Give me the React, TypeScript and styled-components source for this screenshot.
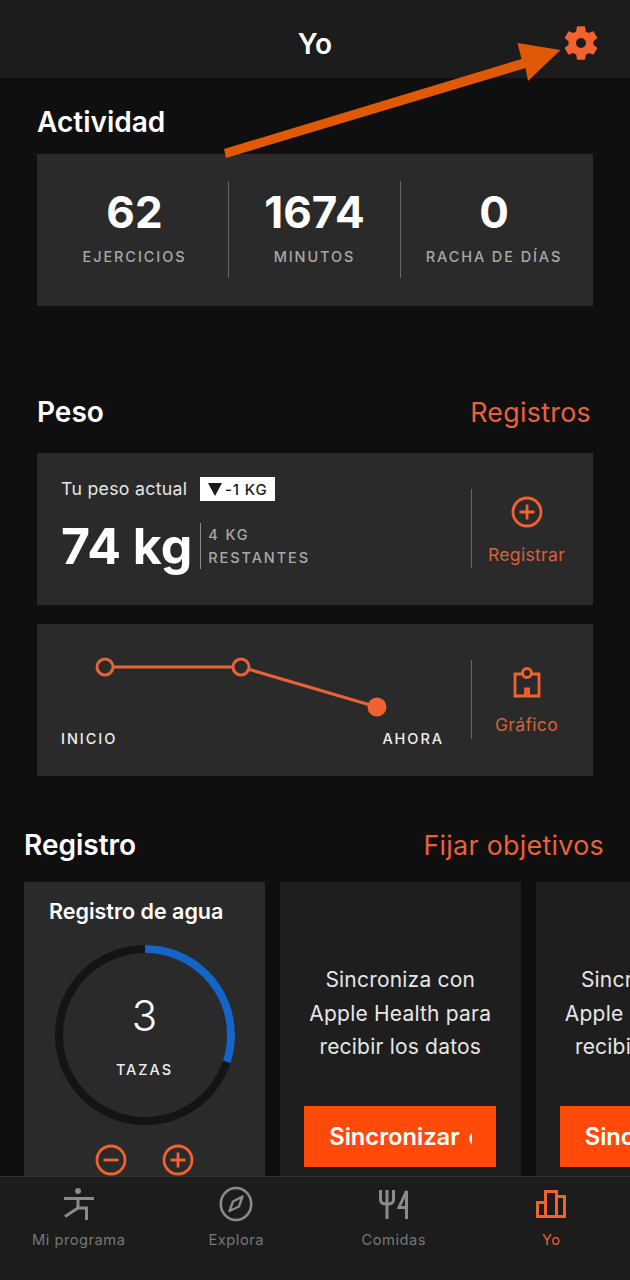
import React from "react";
import styled, { createGlobalStyle } from "styled-components";

const ORANGE = "#e8623a";
const ICON = "#f2622f";
const PANEL = "#2a2a2a";

const Global = createGlobalStyle`
  html, body { margin: 0; padding: 0; background: #0f0f0f; }
  * { box-sizing: border-box; }
`;

const Screen = styled.div`
  position: relative;
  width: 630px;
  height: 1280px;
  overflow: hidden;
  background: #0f0f0f;
  font-family: Inter, "Liberation Sans", sans-serif;
  color: #fff;
`;

const Header = styled.header`
  height: 78px;
  background: #1c1c1c;
  display: flex;
  align-items: center;
  justify-content: center;
  position: relative;
`;

const HeaderTitle = styled.h1`
  margin: 0;
  font-size: 28px;
  font-weight: 600;
  line-height: 1;
  padding-top: 10px;
`;

const GearSlot = styled.div`
  position: absolute;
  top: 23px;
  right: 29px;
  width: 40px;
  height: 40px;
  color: ${ICON};
`;

const Arrow = styled.svg`
  position: absolute;
  left: 0;
  top: 0;
  pointer-events: none;
`;

const Main = styled.main`
  padding: 0 37px;
`;

const SectionHead = styled.div<{ $top: number }>`
  display: flex;
  align-items: center;
  justify-content: space-between;
  height: 34px;
  padding-top: ${(p) => p.$top}px;
  box-sizing: content-box;
  padding-right: 2px;
`;

const SectionTitle = styled.h2`
  margin: 0;
  font-size: 28px;
  font-weight: 600;
`;

const SectionLink = styled.span`
  font-size: 26.8px;
  font-weight: 400;
  color: ${ORANGE};
  letter-spacing: 0.3px;
`;

const Card = styled.section<{ $mt: number }>`
  background: ${PANEL};
  height: 152px;
  margin-top: ${(p) => p.$mt}px;
  display: flex;
`;

const Stats = styled(Card)`
  padding: 27px 0 28px;
`;

const Stat = styled.div<{ $w: number; $divider?: boolean; $shift?: number }>`
  width: ${(p) => p.$w}px;
  display: flex;
  flex-direction: column;
  align-items: center;
  padding-left: ${(p) => Math.max(p.$shift ?? 0, 0)}px;
  padding-right: ${(p) => Math.max(-(p.$shift ?? 0), 0)}px;
  border-right: ${(p) => (p.$divider ? "1.5px solid #666" : "none")};
`;

const StatValue = styled.div`
  font-size: 44px;
  font-weight: 700;
  line-height: 60px;
  margin-top: 1px;
`;

const StatLabel = styled.div`
  font-size: 14.5px;
  font-weight: 500;
  letter-spacing: 1.9px;
  color: #a8a8a8;
  line-height: 20px;
  margin-top: 5px;
`;

const CardBody = styled.div`
  flex: 1;
  padding: 24px 0 0 24px;
  min-width: 0;
`;

const CurrentRow = styled.div`
  display: flex;
  align-items: center;
  height: 24px;
`;

const CurrentLabel = styled.span`
  font-size: 17.7px;
  color: #e6e6e6;
  letter-spacing: 0.3px;
  padding-bottom: 2px;
`;

const DeltaBadge = styled.span`
  margin-left: 13px;
  width: 75px;
  height: 24px;
  background: #fff;
  color: #1a1a1a;
  font-size: 15px;
  font-weight: 500;
  letter-spacing: 0.9px;
  display: flex;
  align-items: center;
  justify-content: center;
  gap: 3px;
`;

const DeltaMark = styled.span`
  width: 0;
  height: 0;
  border-left: 7px solid transparent;
  border-right: 7px solid transparent;
  border-top: 13px solid #1a1a1a;
`;

const WeightRow = styled.div`
  display: flex;
  align-items: center;
  margin-top: 20px;
`;

const WeightValue = styled.div`
  font-size: 50px;
  font-weight: 700;
  line-height: 50px;
  padding-right: 8px;
  white-space: nowrap;
`;

const RemainingBlock = styled.div`
  border-left: 1.5px solid #888;
  height: 46px;
  padding: 2px 0 1px 7px;
  display: flex;
  flex-direction: column;
  justify-content: space-between;
  font-size: 14.5px;
  font-weight: 500;
  line-height: 20px;
  letter-spacing: 1.9px;
  color: #a8a8a8;
`;

const ActionCol = styled.div<{ $gap: number; $pad: number }>`
  width: 122px;
  height: 79px;
  margin-top: 36px;
  padding: ${(p) => p.$pad}px 12px 0 0;
  border-left: 1.5px solid #666;
  display: flex;
  flex-direction: column;
  align-items: center;
  gap: ${(p) => p.$gap}px;
  color: ${ICON};
`;

const ActionLabel = styled.span`
  font-size: 17.6px;
  color: #d8603a;
  letter-spacing: 0.3px;
  line-height: 20px;
  flex-shrink: 0;
`;

const ChartBody = styled.div`
  flex: 1;
  padding: 24px 27px 0 24px;
  min-width: 0;
  display: flex;
  flex-direction: column;
`;

const ChartSvg = styled.svg`
  display: block;
  margin-bottom: -1px;
`;

const ChartLabels = styled.div`
  display: flex;
  justify-content: space-between;
  font-size: 14.5px;
  font-weight: 500;
  letter-spacing: 1.95px;
  color: #eee;
  line-height: 20px;
`;

const RegistroHead = styled(SectionHead)`
  margin-left: -13px;
  margin-right: -13px;
`;

const Carousel = styled.div`
  margin: 20px -37px 0 -13px;
  display: flex;
  gap: 15px;
`;

const WaterCard = styled.div`
  flex: 0 0 241px;
  height: 310px;
  background: ${PANEL};
  display: flex;
  flex-direction: column;
  align-items: center;
  padding-top: 14px;
`;

const WaterTitle = styled.div`
  align-self: flex-start;
  margin-left: 25px;
  font-size: 21.5px;
  font-weight: 600;
  line-height: 30px;
`;

const Ring = styled.div`
  position: relative;
  width: 180px;
  height: 180px;
  margin-top: 19px;
`;

const RingCenter = styled.div`
  position: absolute;
  inset: 0;
  display: flex;
  flex-direction: column;
  align-items: center;
`;

const RingValue = styled.div`
  font-size: 42px;
  font-weight: 300;
  line-height: 50px;
  margin-top: 46px;
`;

const RingLabel = styled.div`
  font-size: 14.5px;
  font-weight: 500;
  letter-spacing: 1.95px;
  line-height: 20px;
  color: #eee;
  margin-top: 19px;
`;

const WaterButtons = styled.div`
  display: flex;
  gap: 35px;
  margin-top: 19px;
  color: ${ICON};
`;

const SyncCard = styled.div`
  flex: 0 0 240.5px;
  height: 310px;
  background: #1e1e1e;
  display: flex;
  flex-direction: column;
  align-items: center;
  padding-top: 81px;
`;

const SyncText = styled.p`
  margin: 0;
  width: 200px;
  text-align: center;
  font-size: 21px;
  line-height: 33.5px;
  color: #e6e6e6;
  letter-spacing: 0.2px;
`;

const SyncButton = styled.div`
  margin-top: 42px;
  width: 192px;
  height: 61px;
  background: #ff4a0a;
  padding: 0 24px 0 25px;
  display: flex;
  align-items: center;
`;

const SyncButtonLabel = styled.span`
  display: block;
  overflow: hidden;
  white-space: nowrap;
  font-size: 23.7px;
  font-weight: 600;
  word-spacing: 3px;
  color: #fff;
`;

const TabBar = styled.nav`
  position: absolute;
  left: 0;
  right: 0;
  bottom: 0;
  height: 104px;
  background: #1c1c1c;
  border-top: 1.5px solid #333;
  display: grid;
  grid-template-columns: repeat(4, 1fr);
`;

const Tab = styled.div<{ $active?: boolean }>`
  display: flex;
  flex-direction: column;
  align-items: center;
  padding-top: 8px;
  color: ${(p) => (p.$active ? ICON : "#8a8a8a")};
`;

const TabIcon = styled.div`
  height: 38px;
  display: flex;
  align-items: center;
  justify-content: center;
`;

const TabLabel = styled.span<{ $active?: boolean }>`
  margin-top: 6.5px;
  font-size: 14.7px;
  letter-spacing: 0.5px;
  line-height: 20px;
  color: ${(p) => (p.$active ? "#e8623a" : "#777")};
`;

const Gear = () => (
  <svg width="40" height="40" viewBox="0 0 24 24" fill="currentColor">
    <path fillRule="evenodd" d="M19.43 12.98c.04-.32.07-.64.07-.98s-.03-.66-.07-.98l2.11-1.65c.19-.15.24-.42.12-.64l-2-3.46c-.12-.22-.39-.3-.61-.22l-2.49 1c-.52-.4-1.08-.73-1.69-.98l-.38-2.65A.49.49 0 0 0 14 2h-4c-.25 0-.46.18-.49.42l-.38 2.65c-.61.25-1.17.59-1.69.98l-2.49-1c-.23-.09-.49 0-.61.22l-2 3.46c-.13.22-.07.49.12.64l2.11 1.65c-.04.32-.07.65-.07.98s.03.66.07.98l-2.11 1.65c-.19.15-.24.42-.12.64l2 3.46c.12.22.39.3.61.22l2.49-1c.52.4 1.08.73 1.69.98l.38 2.65c.03.24.24.42.49.42h4c.25 0 .46-.18.49-.42l.38-2.65c.61-.25 1.17-.59 1.69-.98l2.49 1c.23.09.49 0 .61-.22l2-3.46c.12-.22.07-.49-.12-.64l-2.11-1.65zM12 15a3 3 0 1 1 0-6 3 3 0 0 1 0 6z" />
  </svg>
);

const CirclePlus = () => (
  <svg width="32" height="32" viewBox="0 0 32 32" fill="none" stroke="currentColor" strokeWidth="2.8">
    <circle cx="16" cy="16" r="14" />
    <path d="M16 8.500v15M8.500 16h15" />
  </svg>
);

const CircleMinus = () => (
  <svg width="32" height="32" viewBox="0 0 32 32" fill="none" stroke="currentColor" strokeWidth="2.8">
    <circle cx="16" cy="16" r="14" />
    <path d="M8.500 16h15" />
  </svg>
);

const Clipboard = () => (
  <svg width="30" height="32" viewBox="0 0 30 32" fill="none" stroke="currentColor" strokeWidth="2.8">
    <path d="M10 8H3v22h10.500v-7h3v7H27V8h-7" />
    <circle cx="15" cy="7" r="4.500" />
  </svg>
);

const Warrior = () => (
  <svg width="30" height="32" viewBox="0 0 30 32" fill="none" stroke="currentColor" strokeWidth="3">
    <circle cx="14" cy="3" r="3" fill="currentColor" stroke="none" />
    <path d="M0 10.500h30" />
    <path d="M14 10.500V20" />
    <path d="M1 28.500L14 20h8.500v12" />
  </svg>
);

const Compass = () => (
  <svg width="34" height="36" viewBox="0 0 34 36" fill="none" stroke="currentColor" strokeWidth="2.6">
    <ellipse cx="17" cy="18" rx="15.200" ry="16" />
    <path d="M23.500 10.500L20 20.500 10.500 25 14 15.500z" strokeWidth="2.4" strokeLinejoin="round" />
  </svg>
);

const Cutlery = () => (
  <svg width="30" height="30" viewBox="0 0 30 30" fill="none" stroke="currentColor" strokeWidth="3">
    <path d="M1.500 1v10q0 4 6.500 4t6.500-4V1" />
    <path d="M8 1v29" />
    <path d="M27.500 30V2L20 18.500h7.500" />
  </svg>
);

const Bars = () => (
  <svg width="30" height="30" viewBox="0 0 30 30" fill="none" stroke="currentColor" strokeWidth="3">
    <path d="M1.500 28V13.500h8M9.500 28V2.500h11V28M20.500 7.500h8V28M0 27.500h30" />
  </svg>
);

export default function App() {
  return (
    <Screen>
      <Global />
      <Header>
        <HeaderTitle>Yo</HeaderTitle>
        <GearSlot>
          <Gear />
        </GearSlot>
      </Header>
      <Main>
        <SectionHead $top={27}>
          <SectionTitle>Actividad</SectionTitle>
        </SectionHead>
        <Stats $mt={15}>
          <Stat $w={192} $divider $shift={4}>
            <StatValue>62</StatValue>
            <StatLabel>EJERCICIOS</StatLabel>
          </Stat>
          <Stat $w={172} $divider>
            <StatValue>1674</StatValue>
            <StatLabel>MINUTOS</StatLabel>
          </Stat>
          <Stat $w={192} $shift={-6}>
            <StatValue>0</StatValue>
            <StatLabel>RACHA DE DÍAS</StatLabel>
          </Stat>
        </Stats>

        <SectionHead $top={89}>
          <SectionTitle>Peso</SectionTitle>
          <SectionLink>Registros</SectionLink>
        </SectionHead>
        <Card $mt={24}>
          <CardBody>
            <CurrentRow>
              <CurrentLabel>Tu peso actual</CurrentLabel>
              <DeltaBadge>
                <DeltaMark />
                -1 KG
              </DeltaBadge>
            </CurrentRow>
            <WeightRow>
              <WeightValue>74 kg</WeightValue>
              <RemainingBlock>
                <span>4 KG</span>
                <span>RESTANTES</span>
              </RemainingBlock>
            </WeightRow>
          </CardBody>
          <ActionCol $pad={7} $gap={17}>
            <CirclePlus />
            <ActionLabel>Registrar</ActionLabel>
          </ActionCol>
        </Card>
        <Card $mt={19}>
          <ChartBody>
            <ChartSvg width="383" height="82" viewBox="0 0 383 82" fill="none">
              <path d="M44 19H180L316 59" stroke="#e8623a" strokeWidth="3" />
              <circle cx="44" cy="19" r="8" fill={PANEL} stroke="#e8623a" strokeWidth="3" />
              <circle cx="180" cy="19" r="8" fill={PANEL} stroke="#e8623a" strokeWidth="3" />
              <circle cx="316" cy="59" r="9.500" fill="#f2622f" />
            </ChartSvg>
            <ChartLabels>
              <span>INICIO</span>
              <span>AHORA</span>
            </ChartLabels>
          </ChartBody>
          <ActionCol $pad={6} $gap={17}>
            <Clipboard />
            <ActionLabel>Gráfico</ActionLabel>
          </ActionCol>
        </Card>

        <RegistroHead $top={52}>
          <SectionTitle>Registro</SectionTitle>
          <SectionLink>Fijar objetivos</SectionLink>
        </RegistroHead>
        <Carousel>
          <WaterCard>
            <WaterTitle>Registro de agua</WaterTitle>
            <Ring>
              <svg width="180" height="180" viewBox="0 0 180 180" fill="none">
                <circle cx="90" cy="90" r="86" stroke="#141414" strokeWidth="8" />
                <circle
                  cx="90"
                  cy="90"
                  r="86"
                  stroke="#1565c8"
                  strokeWidth="8"
                  strokeDasharray={`${2 * Math.PI * 86 * 0.3} ${2 * Math.PI * 86}`}
                  transform="rotate(-90 90 90)"
                />
              </svg>
              <RingCenter>
                <RingValue>3</RingValue>
                <RingLabel>TAZAS</RingLabel>
              </RingCenter>
            </Ring>
            <WaterButtons>
              <CircleMinus />
              <CirclePlus />
            </WaterButtons>
          </WaterCard>
          {[0, 1].map((i) => (
            <SyncCard key={i}>
              <SyncText>Sincroniza con Apple Health para recibir los datos</SyncText>
              <SyncButton>
                <SyncButtonLabel>Sincronizar con Apple Health</SyncButtonLabel>
              </SyncButton>
            </SyncCard>
          ))}
        </Carousel>
      </Main>

      <TabBar>
        <Tab>
          <TabIcon>
            <Warrior />
          </TabIcon>
          <TabLabel>Mi programa</TabLabel>
        </Tab>
        <Tab>
          <TabIcon>
            <Compass />
          </TabIcon>
          <TabLabel>Explora</TabLabel>
        </Tab>
        <Tab>
          <TabIcon>
            <Cutlery />
          </TabIcon>
          <TabLabel>Comidas</TabLabel>
        </Tab>
        <Tab $active>
          <TabIcon>
            <Bars />
          </TabIcon>
          <TabLabel $active>Yo</TabLabel>
        </Tab>
      </TabBar>

      <Arrow width="630" height="170" viewBox="0 0 630 170">
        <path d="M224 149L521.500 59L517.500 43L560.500 50L528 81L525.500 68L226 158Z" fill="#e05a05" />
      </Arrow>
    </Screen>
  );
}
